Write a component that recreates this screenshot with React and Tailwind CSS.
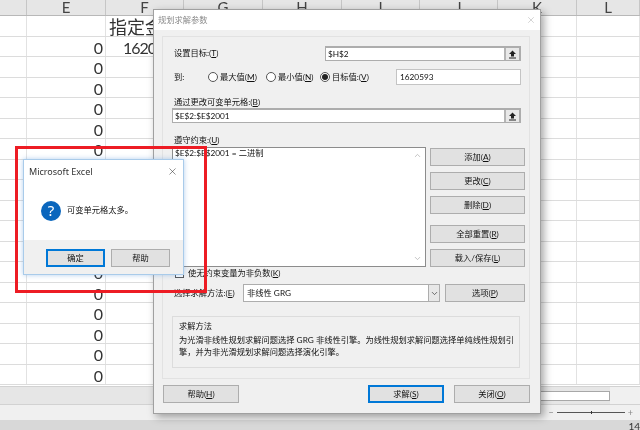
import React from "react";
import { X, ChevronDown, ChevronUp } from "lucide-react";

const cols = [
  { w: "w-[27px]", name: "" },
  { w: "w-[79px]", name: "E" },
  { w: "w-[78px]", name: "F" },
  { w: "w-[79px]", name: "G" },
  { w: "w-[79px]", name: "H" },
  { w: "w-[78px]", name: "I" },
  { w: "w-[78px]", name: "J" },
  { w: "w-[79px]", name: "K" },
  { w: "w-[63px]", name: "L" },
];

const rows = Array.from({ length: 18 }, (_, i) => i);

function Key({ label, k }) {
  return (
    <span>
      {label}(<span className="underline">{k}</span>)
    </span>
  );
}

function Btn({ children, focus, className = "" }) {
  const cls = focus ? "border-2 border-[#0078d7]" : "border border-[#adadad]";
  return <div className={`h-[18px] flex items-center justify-center bg-[#e1e1e1] ${cls} ${className}`}>{children}</div>;
}

function RefBtn() {
  return (
    <div className="w-[15px] h-full bg-[#e8e8e8] border-l-2 border-[#b5b5b5] flex items-center justify-center">
      <svg width="9" height="9" viewBox="0 0 9 9">
        <path d="M4.5 0.5L8 4H6V6.5H3V4H1Z" fill="#222" />
        <rect x="1" y="7.5" width="7" height="1" fill="#222" />
      </svg>
    </div>
  );
}

function RefInput({ value, className = "" }) {
  return (
    <div className={`flex items-stretch bg-white border border-[#adadad] border-t-2 border-r-2 ${className}`}>
      <div className="flex-1 pl-[2px] flex items-center">{value}</div>
      <RefBtn />
    </div>
  );
}

function Radio({ checked, children, className = "" }) {
  return (
    <div className={`flex items-center gap-[2px] ${className}`}>
      <div className="w-[10px] h-[10px] rounded-full bg-white border border-[#555] flex items-center justify-center">
        {checked && <div className="w-[6px] h-[6px] rounded-full bg-[#222]" />}
      </div>
      {children}
    </div>
  );
}

function Sheet() {
  return (
    <div className="h-[386px] bg-white overflow-hidden">
      <div className="flex h-[16px] bg-[#e6e6e6] border-b border-[#b8b8b8]">
        {cols.map((c, i) => (
          <div key={i} className={`${c.w} border-r border-[#c6c6c6] flex items-center justify-center text-[15px] text-[#444] leading-none`}>
            {c.name}
          </div>
        ))}
      </div>
      {rows.map((r) => (
        <div key={r} className="flex h-[20.5px] border-b border-[#dcdcdc]">
          {cols.map((c, i) => (
            <div key={i} className={`${c.w} border-r border-[#e2e2e2] flex items-center justify-end pr-[2px] pt-[3px] text-[16px] text-[#333] leading-none whitespace-nowrap overflow-hidden`}>
              {i === 1 && r > 0 ? "0" : ""}
              {i === 2 && r === 0 ? <span className="text-[18px]">指定金额</span> : ""}
              {i === 2 && r === 1 ? <span className="tracking-[-1px]">1620593</span> : ""}
            </div>
          ))}
        </div>
      ))}
    </div>
  );
}

function SolverDialog() {
  return (
    <div className="absolute left-[153px] top-[9px] w-[388px] h-[405px] bg-[#f0f0f0] border border-[#a0a0a0] shadow-[3px_3px_8px_rgba(0,0,0,0.35)] flex flex-col text-[8.25px] text-[#111] leading-none">
      <div className="h-[20px] bg-white flex items-center justify-between pl-[4px] pr-[4px] text-[#8a8a8a]">
        <span>规划求解参数</span>
        <X size={10} strokeWidth={1} color="#999" />
      </div>
      <div className="ml-[8px] mt-[6px] w-[368px] h-[343px] border border-[#e2e2e2] pl-[9px]">
        <div className="mt-[9px] h-[15px] flex items-center">
          <div className="w-[153px] pl-[2px]"><Key label="设置目标:" k="T" /></div>
          <RefInput value="$H$2" className="w-[196px] h-full" />
        </div>
        <div className="mt-[8px] h-[16px] flex items-center">
          <div className="w-[36px] pl-[2px]">到:</div>
          <Radio className="w-[58px]"><Key label="最大值" k="M" /></Radio>
          <Radio className="w-[54px]"><Key label="最小值" k="N" /></Radio>
          <Radio checked className="w-[76px]"><Key label="目标值:" k="V" /></Radio>
          <div className="w-[125px] h-full bg-white border border-[#c4c4c4] pl-[3px] flex items-center">1620593</div>
        </div>
        <div className="mt-[11px] h-[12px] pl-[2px] flex items-center"><Key label="通过更改可变单元格:" k="B" /></div>
        <RefInput value="$E$2:$E$2001" className="w-[349px] h-[15px]" />
        <div className="mt-[11px] h-[12px] pl-[2px] flex items-center"><Key label="遵守约束:" k="U" /></div>
        <div className="mt-px flex">
          <div className="w-[254px] h-[120px] bg-white border border-[#8c8c8c] flex">
            <div className="flex-1 pl-[2px] pt-[1px]">$E$2:$E$2001 = 二进制</div>
            <div className="w-[16px] flex flex-col justify-between items-center py-[3px]">
              <ChevronUp size={9} color="#b0b0b0" />
              <ChevronDown size={9} color="#b0b0b0" />
            </div>
          </div>
          <div className="ml-[4px] mt-px w-[95px] flex flex-col">
            <Btn><Key label="添加" k="A" /></Btn>
            <Btn className="mt-[6px]"><Key label="更改" k="C" /></Btn>
            <Btn className="mt-[6px]"><Key label="删除" k="D" /></Btn>
            <Btn className="mt-[11px]"><Key label="全部重置" k="R" /></Btn>
            <Btn className="mt-[6px]"><Key label="载入/保存" k="L" /></Btn>
          </div>
        </div>
        <div className="h-[12px] flex items-center gap-[4px] pl-[3px]">
          <div className="w-[9px] h-[9px] bg-white border border-[#555]" />
          <Key label="使无约束变量为非负数" k="K" />
        </div>
        <div className="mt-[5px] h-[18px] flex items-center">
          <div className="w-[71px] pl-[2px]"><Key label="选择求解方法:" k="E" /></div>
          <div className="w-[197px] h-full bg-white border border-[#adadad] flex items-stretch">
            <div className="flex-1 pl-[3px] flex items-center">非线性 GRG</div>
            <div className="w-[11px] bg-[#e8e8e8] border-l border-[#adadad] flex items-center justify-center">
              <ChevronDown size={9} color="#444" />
            </div>
          </div>
          <Btn className="ml-[5px] w-[80px]"><Key label="选项" k="P" /></Btn>
        </div>
        <div className="mt-[14px] w-[348px] h-[52px] border border-[#dcdcdc] px-[6px] pt-[5px]">
          <div>求解方法</div>
          <div className="mt-[4px] leading-[12px] w-[336px]">
            为光滑非线性规划求解问题选择 GRG 非线性引擎。为线性规划求解问题选择单纯线性规划引擎，并为非光滑规划求解问题选择演化引擎。
          </div>
        </div>
      </div>
      <div className="mt-[6px] ml-[9px] flex">
        <Btn className="w-[76px]"><Key label="帮助" k="H" /></Btn>
        <Btn focus className="ml-[129px] w-[76px]"><Key label="求解" k="S" /></Btn>
        <Btn className="ml-[10px] w-[76px]"><Key label="关闭" k="O" /></Btn>
      </div>
    </div>
  );
}

function MessageBox() {
  return (
    <div className="absolute left-[23px] top-[159px] w-[161px] h-[116px] bg-white border border-[#a9cbea] shadow-[0_0_5px_rgba(90,150,220,0.45)] flex flex-col text-[8.25px] text-[#111] leading-none">
      <div className="h-[22px] flex items-center justify-between pl-[5px] pr-[5px]">
        <span className="text-[9px] text-[#333] font-['Noto_Sans',sans-serif]">Microsoft Excel</span>
        <X size={11} strokeWidth={1.2} color="#333" />
      </div>
      <div className="flex-1 flex items-center pl-[17px] pb-px">
        <div className="w-[20px] h-[20px] rounded-full bg-[#0a66bd] flex items-center justify-center text-white text-[15px] font-['Noto_Sans',sans-serif]">?</div>
        <div className="ml-[6px]">可变单元格太多。</div>
      </div>
      <div className="h-[34px] bg-[#f0f0f0] flex items-center pl-[22px] pt-[2px]">
        <Btn focus className="w-[59px]">确定</Btn>
        <Btn className="ml-[6px] w-[59px]">帮助</Btn>
      </div>
    </div>
  );
}

export default function App() {
  return (
    <div className="relative w-[640px] h-[430px] overflow-hidden flex flex-col bg-white blur-[0.3px] font-['Lato','Noto_Sans_CJK_SC',sans-serif]">
      <Sheet />
      <div className="h-[19px] bg-[#e6e6e6] border-y border-[#d2d2d2] flex items-center justify-end">
        <div className="w-[300px] h-[10px] bg-white border border-[#a8a8a8]" />
        <div className="w-[30px] h-full bg-[#f0f0f0]" />
      </div>
      <div className="h-[15px] bg-[#f0f0f0] flex items-center justify-end pr-[7px] text-[#888]">
        <div className="w-[12px] h-[2px] bg-[#aaa] mr-[16px]" />
        <div className="w-[12px] h-[2px] bg-[#aaa] mr-[15px]" />
        <div className="w-[12px] h-[2px] bg-[#aaa] mr-[15px]" />
        <span className="text-[9px] leading-none">−</span>
        <div className="relative mx-[3px] w-[68px] h-px bg-[#555]">
          <div className="absolute left-[34px] top-[-1px] w-px h-[3px] bg-[#333]" />
        </div>
        <span className="text-[9px] leading-none">+</span>
      </div>
      <div className="h-[10px] bg-[#d8d8d8] flex items-start justify-end text-[10px] text-[#333] leading-none pt-px overflow-hidden">
        14
      </div>
      <SolverDialog />
      <div className="absolute left-[15px] top-[146px] w-[192px] h-[147px] border-[3px] border-[#ed1c24]" />
      <MessageBox />
    </div>
  );
}
